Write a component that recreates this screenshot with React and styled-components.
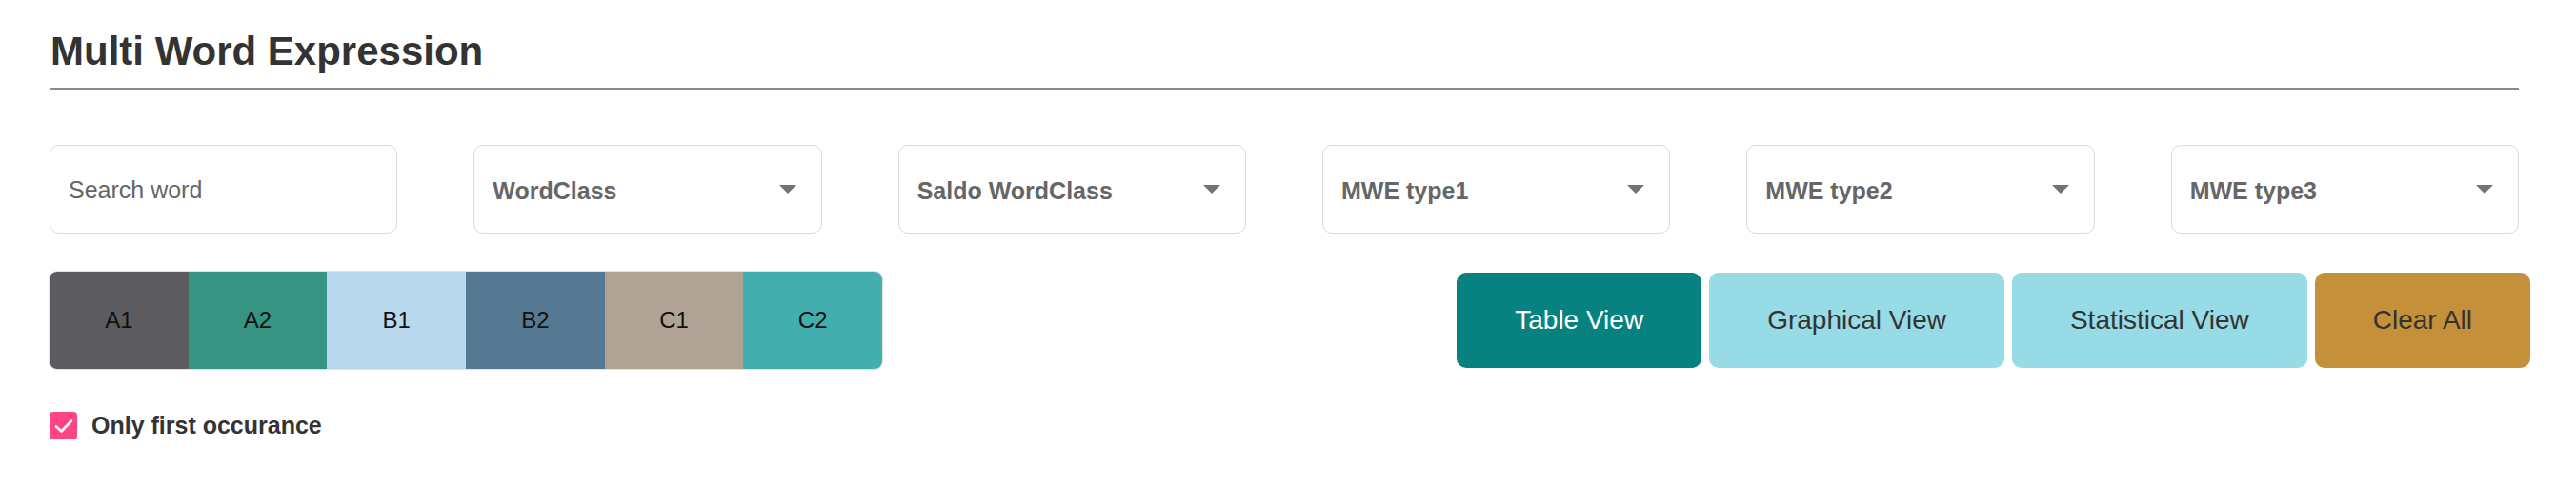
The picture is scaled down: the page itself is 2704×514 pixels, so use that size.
import React, { useState } from 'react';
import styled, { createGlobalStyle } from 'styled-components';

const GlobalStyle = createGlobalStyle`
  body {
    margin: 0;
    background: #fff;
    font-family: "Liberation Sans", Arial, sans-serif;
  }
`;

const Page = styled.div`
  padding: 33px 60px 40px 52px;
  color: #333;
`;

const Title = styled.h1`
  margin: 0;
  font-size: 42px;
  line-height: 42px;
  font-weight: 700;
  color: #333;
  padding-left: 1px;
`;

const Divider = styled.hr`
  margin: 17px 0 0;
  border: none;
  height: 2px;
  background: #8a8a8a;
`;

const Filters = styled.div`
  display: grid;
  grid-template-columns: repeat(6, 1fr);
  column-gap: 80px;
  margin-top: 58px;
`;

const Field = styled.div`
  box-sizing: border-box;
  height: 93px;
  border: 1px solid #dcdcdc;
  border-radius: 10px;
  display: flex;
  align-items: center;
  justify-content: space-between;
  padding: ${(p) => (p.bold ? '3px 26px 0 19px' : '1px 26px 0 19px')};
  font-size: 25px;
  color: #666;
  font-weight: ${(p) => (p.bold ? 700 : 400)};
  background: #fff;
`;

const Arrow = styled.span`
  width: 0;
  height: 0;
  margin-bottom: 3px;
  border-left: 9px solid transparent;
  border-right: 9px solid transparent;
  border-top: 9px solid #737373;
`;

const ActionRow = styled.div`
  display: flex;
  justify-content: space-between;
  align-items: center;
  margin-top: 40px;
`;

const LevelBar = styled.div`
  display: flex;
  width: 874px;
  height: 102px;
  border-radius: 8px;
  overflow: hidden;
  box-shadow: 0 0 0 1px #e2e2e2;
`;

const Level = styled.div`
  flex: 1;
  display: flex;
  align-items: center;
  justify-content: center;
  background: ${(p) => p.color};
  font-size: 24px;
  color: #111;
`;

const ButtonGroup = styled.div`
  display: flex;
  gap: 8px;
  margin-right: -12px;
`;

const ViewButton = styled.button`
  height: 100px;
  padding: 0 61px;
  border: none;
  border-radius: 10px;
  font-family: "Liberation Sans", Arial, sans-serif;
  font-size: 28px;
  cursor: pointer;
  background: ${(p) => p.bg};
  color: ${(p) => p.fg};
`;

const CheckRow = styled.label`
  display: flex;
  align-items: center;
  gap: 15px;
  margin-top: 45px;
  font-size: 25px;
  font-weight: 700;
  color: #333;
  cursor: pointer;
`;

const Box = styled.span`
  width: 29px;
  height: 29px;
  border-radius: 4px;
  background: ${(p) => (p.checked ? '#ff4583' : '#fff')};
  border: ${(p) => (p.checked ? 'none' : '2px solid #999')};
  display: flex;
  align-items: center;
  justify-content: center;
  box-sizing: border-box;
`;

const levels = [
  { name: 'A1', color: '#5c5b60' },
  { name: 'A2', color: '#389482' },
  { name: 'B1', color: '#b8d8eb' },
  { name: 'B2', color: '#557893' },
  { name: 'C1', color: '#b0a295' },
  { name: 'C2', color: '#43aeae' },
];

const selects = ['WordClass', 'Saldo WordClass', 'MWE type1', 'MWE type2', 'MWE type3'];

export default function App() {
  const [firstOnly, setFirstOnly] = useState(true);

  return (
    <Page>
      <GlobalStyle />
      <Title>Multi Word Expression</Title>
      <Divider />

      <Filters>
        <Field>Search word</Field>
        {selects.map((s) => (
          <Field bold key={s}>
            {s}
            <Arrow />
          </Field>
        ))}
      </Filters>

      <ActionRow>
        <LevelBar>
          {levels.map((l) => (
            <Level key={l.name} color={l.color}>{l.name}</Level>
          ))}
        </LevelBar>
        <ButtonGroup>
          <ViewButton bg="#078280" fg="#fff">Table View</ViewButton>
          <ViewButton bg="#97dbe6" fg="#333">Graphical View</ViewButton>
          <ViewButton bg="#97dbe6" fg="#333">Statistical View</ViewButton>
          <ViewButton bg="#c4913a" fg="#333">Clear All</ViewButton>
        </ButtonGroup>
      </ActionRow>

      <CheckRow onClick={() => setFirstOnly(!firstOnly)}>
        <Box checked={firstOnly}>
          {firstOnly && (
            <svg width="20" height="16" viewBox="0 0 20 16">
              <path d="M2 8.5 L7.5 13.5 L18 2.5" fill="none" stroke="#fff" strokeWidth="2.6" strokeLinecap="round" strokeLinejoin="round" />
            </svg>
          )}
        </Box>
        Only first occurance
      </CheckRow>
    </Page>
  );
}
